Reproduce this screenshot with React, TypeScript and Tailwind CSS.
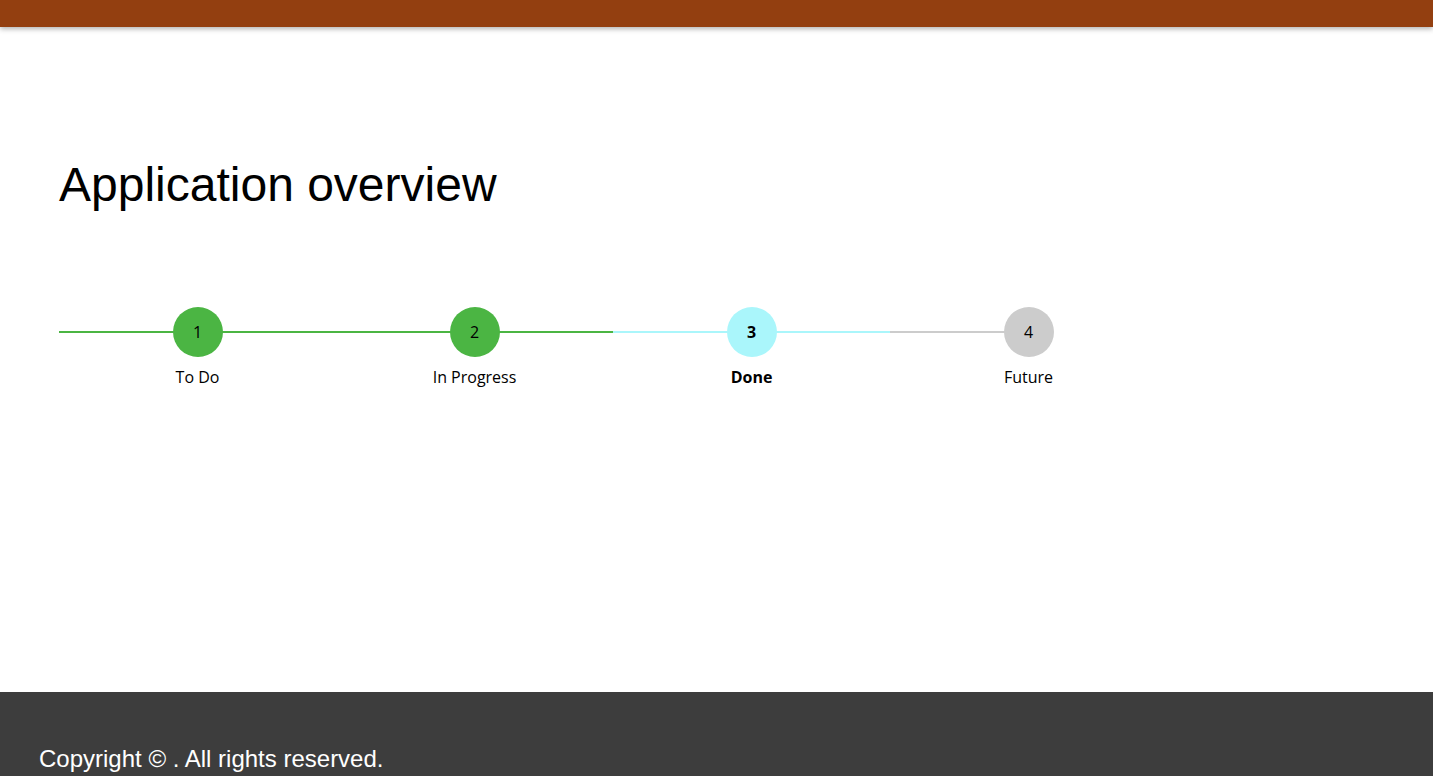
export default function App() {
  const steps = [
    { n: "1", label: "To Do", bg: "bg-[#4bb543]", line: "bg-[#4bb543]", bold: false, full: true },
    { n: "2", label: "In Progress", bg: "bg-[#4bb543]", line: "bg-[#4bb543]", bold: false, full: true },
    { n: "3", label: "Done", bg: "bg-[#aaf6fb]", line: "bg-[#aaf6fb]", bold: true, full: true },
    { n: "4", label: "Future", bg: "bg-[#cccccc]", line: "bg-[#cccccc]", bold: false, full: false },
  ];
  return (
    <div className="min-h-[776px] flex flex-col bg-white" style={{ fontFamily: "'Liberation Sans', Arial, sans-serif" }}>
      <div className="h-[27px] bg-[#933f10] shadow-[0_2px_5px_rgba(0,0,0,0.3)]" />
      <div className="h-[665px] px-[59px]">
        <h1 className="mt-[130px] text-[48px] leading-[56px] text-black">Application overview</h1>
        <div className="mt-[94px] flex" style={{ fontFamily: "'Open Sans', 'Noto Sans', sans-serif" }}>
          {steps.map((s) => (
            <div key={s.n} className="w-[277px] flex flex-col items-center relative">
              <div className={`absolute top-[24px] left-0 h-[2px] ${s.line} ${s.full ? "w-full" : "w-1/2"}`} />
              <div className={`relative w-[50px] h-[50px] rounded-full ${s.bg} flex items-center justify-center text-[16px] text-black ${s.bold ? "font-bold" : ""}`}>{s.n}</div>
              <div className={`mt-[9px] text-[16px] leading-[22px] text-black ${s.bold ? "font-bold" : ""}`}>{s.label}</div>
            </div>
          ))}
        </div>
      </div>
      <div className="flex-1 bg-[#3d3d3d] px-[39px] pt-[53px]">
        <p className="text-white text-[24px] leading-[28px]">Copyright © . All rights reserved.</p>
      </div>
    </div>
  );
}
